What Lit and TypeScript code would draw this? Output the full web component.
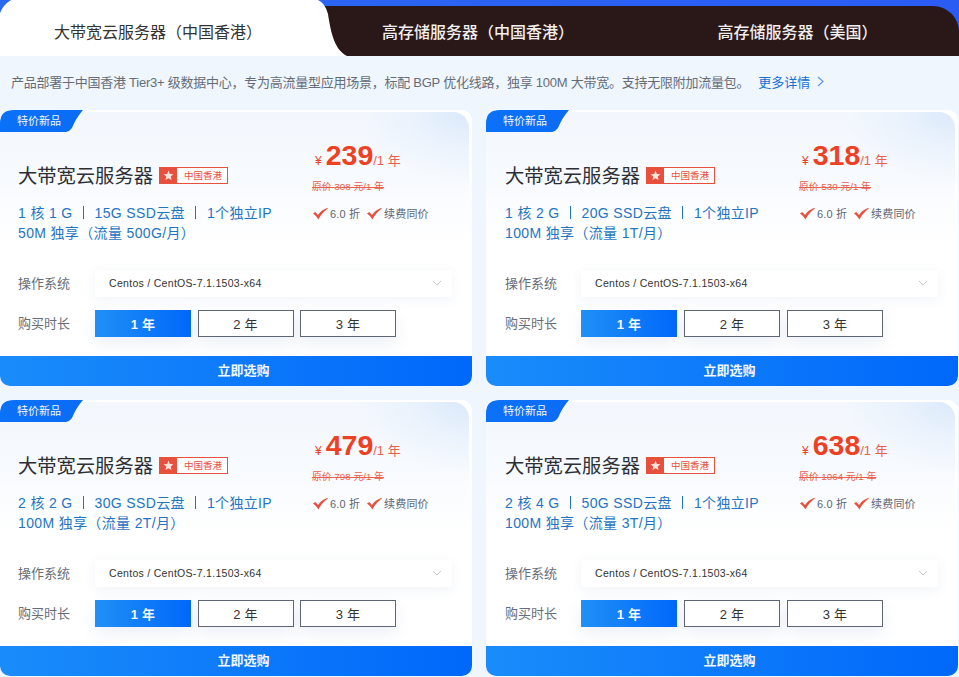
import { LitElement, html, css, svg } from "lit";
import { customElement } from "lit/decorators.js";

const plans = [
  { p: "239", o: "308", a: "1 核 1 G", d: "15G SSD云盘", b: "50M 独享（流量 500G/月）" },
  { p: "318", o: "530", a: "1 核 2 G", d: "20G SSD云盘", b: "100M 独享（流量 1T/月）" },
  { p: "479", o: "798", a: "2 核 2 G", d: "30G SSD云盘", b: "100M 独享（流量 2T/月）" },
  { p: "638", o: "1064", a: "2 核 4 G", d: "50G SSD云盘", b: "100M 独享（流量 3T/月）" },
];

const check = svg`<svg class="check" viewBox="0 0 16 13" width="16" height="13"><path d="M1 6.5 L3.2 5 L6 8 C8 5 11 2.5 15.5 .8 L15.8 1.4 C12 4 9 7.5 6.4 12.4 C5 10 3 8 1 6.5Z" fill="#e8503e"/></svg>`;

@customElement("app-root")
export class AppRoot extends LitElement {
  static styles = css`
    :host { display: block; width: 959px; height: 677px; overflow: hidden; background: #eff6fe;
      font-family: "Liberation Sans", "Noto Sans CJK SC", sans-serif; color: #333; }
    .tabs { position: relative; height: 56px; display: flex; background: linear-gradient(90deg, #2a6af2, #2a5cf4); }
    .dark { position: absolute; left: 300px; right: 0; top: 6px; bottom: 0; background: #2a1818; border-top-right-radius: 26px; }
    .shape { position: absolute; left: 0; top: 0; }
    .tab { position: relative; display: flex; align-items: center; justify-content: center; padding-top: 6px; box-sizing: border-box;
      font-size: 16px; font-weight: 500; color: #f2eeee; white-space: nowrap; }
    .t1 { width: 316px; font-weight: 400; color: #333; }
    .t2 { width: 324px; }
    .t3 { width: 315px; }
    .desc { height: 54px; display: flex; align-items: center; padding: 0 11px 3px; font-size: 13px; color: #666d78; box-sizing: border-box; letter-spacing: -.25px; white-space: nowrap; }
    .more { color: #1670d8; margin-left: 9px; letter-spacing: 0; }
    .chev { margin-left: 7px; }
    .grid { display: grid; grid-template-columns: 472px 472px; column-gap: 14px; row-gap: 14px; }
    .card { position: relative; height: 276px; background: #fff; border-radius: 10px; overflow: hidden; display: flex; flex-direction: column; }
    .glow { position: absolute; left: 0; top: 2px; right: 3px; height: 130px; border-radius: 14px 16px 0 0;
      background: radial-gradient(110px 70px at 100% 0, #dbe9fb 0, rgba(226,238,252,.55) 50%, rgba(255,255,255,0) 100%),
        linear-gradient(180deg, #f3f7fd 0, #f7fafe 50%, #fff 100%); }
    .ribbon { position: absolute; left: 0; top: 0; width: 83px; height: 22px; }
    .ribbon-t { position: absolute; left: 17px; top: 0; height: 22px; line-height: 22px; font-size: 11px; color: #f2f8ff; }
    .body { position: relative; flex: 1; padding: 0 18px; }
    .top { display: flex; height: 160px; }
    .left { width: 294px; padding-top: 51px; box-sizing: border-box; }
    .title { display: flex; align-items: center; font-size: 19.3px; color: #2c2f36; height: 28px; }
    .tag { display: flex; align-items: stretch; margin-left: 6px; width: 69px; height: 17px; border: 1px solid #e8503e; box-sizing: border-box; background: #fff; }
    .flag { width: 17px; background: #e8503e; display: flex; align-items: center; justify-content: center; }
    .tag-t { flex: 1; font-size: 9.5px; line-height: 15px; color: #e8503e; text-align: center; padding-left: 2px; }
    .spec { margin-top: 15px; font-size: 14px; line-height: 19.5px; color: #1f74c4; letter-spacing: .35px; white-space: nowrap; }
    .sep { display: inline-block; width: 22px; text-align: center; letter-spacing: 0; }
    .sep i { display: inline-block; width: 1px; height: 13px; background: #1f74c4; vertical-align: -1px; }
    .right { padding-top: 29px; font-size: 12px; }
    .price { display: flex; align-items: baseline; color: #ee4124; height: 33px; margin-left: 3px; }
    .yen { font-size: 12px; margin-right: 4px; }
    .num { font-size: 28.5px; font-weight: 700; }
    .per { font-size: 13px; color: #e8604c; }
    .orig { font-size: 9.8px; color: #e8604c; text-decoration: line-through; margin-top: 5px; height: 20px; line-height: 20px; white-space: nowrap; }
    .feat { display: flex; align-items: center; margin-top: 8px; font-size: 11px; color: #5c6675; letter-spacing: .15px; white-space: nowrap; }
    .check { margin-right: 2px; }
    .gap { margin-left: 6px; }
    .row { display: flex; align-items: center; margin-bottom: 13px; height: 27px; }
    .lbl { width: 77px; font-size: 13px; color: #666d78; padding-bottom: 2px; box-sizing: border-box; }
    .sel { width: 357px; height: 27px; background: #fff; display: flex; align-items: center; justify-content: space-between; padding: 0 10px 1px 14px; box-sizing: border-box;
      font-size: 10.5px; color: #333; letter-spacing: .3px; box-shadow: 0 3px 12px rgba(60,100,170,.08); border-radius: 2px; }
    .btns { display: flex; gap: 6.5px; }
    .b { width: 96px; height: 27px; border: 1px solid #5c6675; background: #fff; box-sizing: border-box; display: flex; align-items: center; justify-content: center; font-size: 13px; color: #333; box-shadow: 0 6px 16px rgba(60,100,170,.1); letter-spacing: .3px; padding-bottom: 1px; }
    .b.on { border: none; background: linear-gradient(90deg, #2090f6, #0068fa); color: #f2f8ff; font-weight: 700; }
    .buy { height: 30px; background: linear-gradient(90deg, #1a8cfa, #0068fa); color: #f2f8ff; display: flex; align-items: center; justify-content: center; font-size: 13px; font-weight: 700; border-radius: 0 0 8px 8px; flex: none; padding: 0 0 3px 15px; box-sizing: border-box; }
    .card:nth-child(even) .top { margin-left: 1px; }
    .card:nth-child(even) .lbl { padding-left: 1px; }
    .card:nth-child(even) .btns { gap: 7px; }
  `;

  private card(p: (typeof plans)[number]) {
    return html`<div class="card">
      <div class="glow"></div>
      <svg class="ribbon" viewBox="0 0 83 22"><defs><linearGradient id="rb"><stop offset="0" stop-color="#0a72f8"/><stop offset="1" stop-color="#0b6cf6"/></linearGradient></defs>
        <path d="M0 13 Q0 0 14 0 H83 Q76 8 72 18 Q70 21 66 22 H8 Q2 22 0 26Z" fill="url(#rb)"/></svg>
      <span class="ribbon-t">特价新品</span>
      <div class="body">
        <div class="top">
          <div class="left">
            <div class="title">大带宽云服务器
              <span class="tag"><span class="flag"><svg width="11" height="11" viewBox="0 0 10 10"><path d="M5 .5 6.2 3.6 9.5 3.8 7 5.9 7.8 9.2 5 7.4 2.2 9.2 3 5.9 .5 3.8 3.8 3.6Z" fill="#fbe4e0"/></svg></span><span class="tag-t">中国香港</span></span>
            </div>
            <div class="spec">${p.a}<span class="sep"><i></i></span>${p.d}<span class="sep"><i></i></span>1个独立IP<br />${p.b}</div>
          </div>
          <div class="right">
            <div class="price"><span class="yen">¥</span><span class="num">${p.p}</span><span class="per">/1 年</span></div>
            <div class="orig">原价 ${p.o} 元/1 年</div>
            <div class="feat">${check}6.0 折<span class="gap"></span>${check}续费同价</div>
          </div>
        </div>
        <div class="row"><span class="lbl">操作系统</span>
          <div class="sel"><span>Centos / CentOS-7.1.1503-x64</span>
            <svg width="10" height="6" viewBox="0 0 10 6"><path d="M1 1 5 5 9 1" fill="none" stroke="#c4cad2" stroke-width="1"/></svg></div></div>
        <div class="row"><span class="lbl">购买时长</span>
          <div class="btns"><div class="b on">1 年</div><div class="b">2 年</div><div class="b">3 年</div></div></div>
      </div>
      <div class="buy">立即选购</div>
    </div>`;
  }

  render() {
    return html`
      <div class="tabs">
        <div class="dark"></div>
        <svg class="shape" width="350" height="56" viewBox="0 0 350 56">
          <path d="M0 13 Q3 5 11 0 H318 Q325 3 328 14 C331 34 335 50 347 56 H0Z" fill="#fff"/>
        </svg>
        <div class="tab t1">大带宽云服务器（中国香港）</div>
        <div class="tab t2">高存储服务器（中国香港）</div>
        <div class="tab t3">高存储服务器（美国）</div>
      </div>
      <div class="desc">产品部署于中国香港 Tier3+ 级数据中心，专为高流量型应用场景，标配 BGP 优化线路，独享 100M 大带宽。支持无限附加流量包。
        <span class="more">更多详情</span>
        <svg class="chev" width="7" height="11" viewBox="0 0 7 11"><path d="M1 1 6 5.5 1 10" fill="none" stroke="#5a9ae0" stroke-width="1.2"/></svg>
      </div>
      <div class="grid">${plans.map((p) => this.card(p))}</div>
    `;
  }
}
